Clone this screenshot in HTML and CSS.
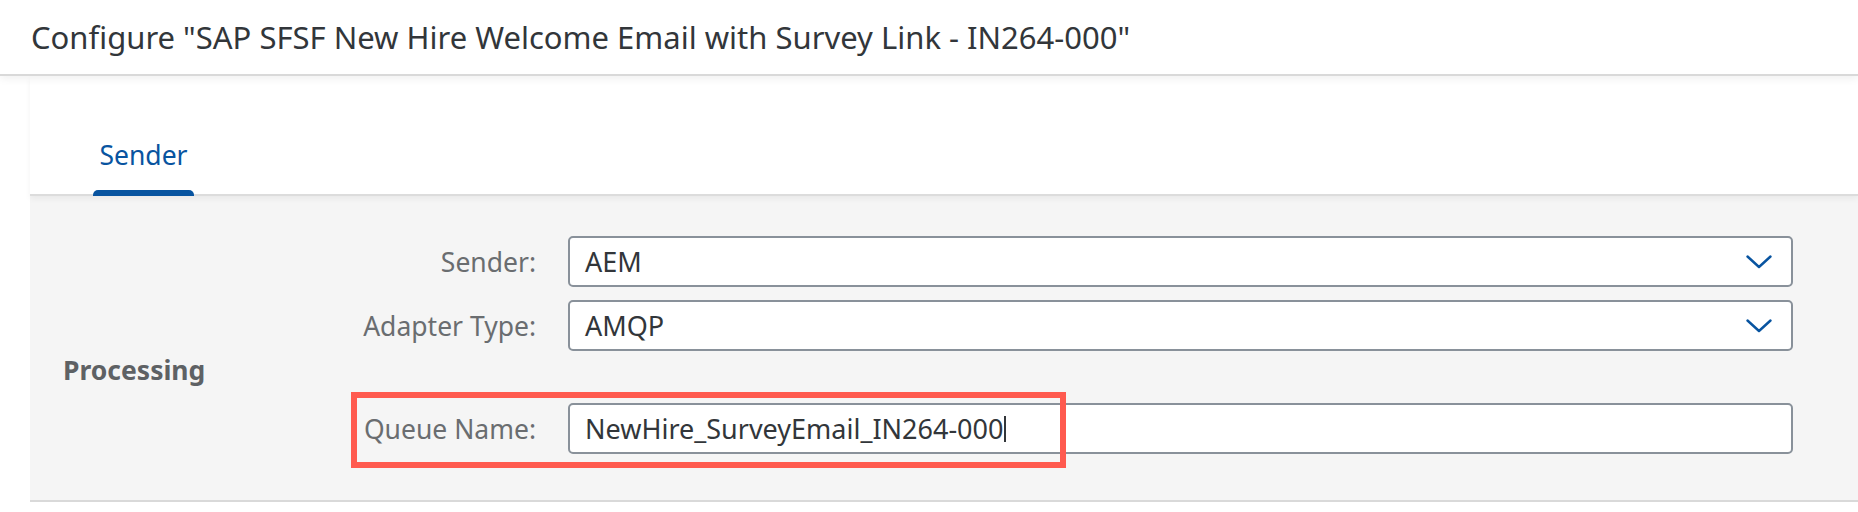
FILE: index.html
```html
<!DOCTYPE html>
<html lang="en">
<head>
<meta charset="utf-8">
<title>Configure</title>
<link rel="stylesheet" href="styles.css">
</head>
<body>
<header class="page-header">
  <h1 class="page-title">Configure "SAP SFSF New Hire Welcome Email with Survey Link - IN264-000"</h1>
</header>
<main class="content">
  <nav class="tabbar">
    <div class="tab tab-active">Sender</div>
  </nav>
  <section class="panel">
    <div class="section-title">Processing</div>
    <div class="form">
      <div class="row">
        <label class="label">Sender:</label>
        <div class="field select">
          <span class="value">AEM</span>
          <svg class="chevron" width="26" height="14" viewBox="0 0 26 14"><path d="M1.5 1.5 L13 12 L24.5 1.5" fill="none" stroke="#0854a0" stroke-width="2.4" stroke-linecap="round" stroke-linejoin="round"/></svg>
        </div>
      </div>
      <div class="row">
        <label class="label">Adapter Type:</label>
        <div class="field select">
          <span class="value">AMQP</span>
          <svg class="chevron" width="26" height="14" viewBox="0 0 26 14"><path d="M1.5 1.5 L13 12 L24.5 1.5" fill="none" stroke="#0854a0" stroke-width="2.4" stroke-linecap="round" stroke-linejoin="round"/></svg>
        </div>
      </div>
      <div class="row row-queue">
        <label class="label">Queue Name:</label>
        <div class="field">
          <span class="value">NewHire_SurveyEmail_IN264-000</span><span class="caret"></span>
        </div>
        <div class="highlight"></div>
      </div>
    </div>
  </section>
</main>
</body>
</html>
```
FILE: styles.css
```css
html, body {
  margin: 0;
  padding: 0;
  background: #ffffff;
}
body {
  font-family: "Noto Sans", "Liberation Sans", sans-serif;
  color: #32363a;
}
.page-header {
  height: 74px;
  border-bottom: 2px solid #d9d9d9;
  box-shadow: 0 3px 8px rgba(0, 0, 0, 0.06);
  display: flex;
  align-items: center;
  position: relative;
  z-index: 2;
}
.page-title {
  margin: 0 0 0 31px;
  font-family: "Noto Sans", "Liberation Sans", sans-serif;
  font-weight: normal;
  font-size: 31px;
  color: #32363a;
}
.content {
  margin-left: 30px;
}
.tabbar {
  height: 118px;
  display: flex;
  align-items: flex-end;
  padding-left: 63px;
  border-bottom: 2px solid #dcdcdc;
  box-shadow: 0 3px 6px rgba(0, 0, 0, 0.05);
  position: relative;
  z-index: 1;
}
.tab {
  width: 101px;
  padding-bottom: 23px;
  display: flex;
  justify-content: center;
  font-size: 26.5px;
  line-height: 36px;
  color: #0854a0;
  position: relative;
  top: 2px;
}
.tab-active::after {
  content: "";
  position: absolute;
  left: 0;
  right: 0;
  bottom: 0;
  height: 6px;
  background: #0854a0;
  border-radius: 5px 5px 0 0;
}
.panel {
  background: #f5f5f5;
  display: flex;
  padding: 40px 65px 46px 33px;
  border-bottom: 2px solid #d9d9d9;
  height: 218px;
}
.section-title {
  width: 150px;
  padding-top: 116px;
  font-size: 26.5px;
  font-weight: bold;
  color: #5e6164;
}
.form {
  flex: 1;
  display: flex;
  flex-direction: column;
  gap: 13px;
}
.row {
  display: flex;
  align-items: center;
  gap: 32px;
  position: relative;
}
.row-queue {
  margin-top: 39px;
}
.label {
  width: 323px;
  text-align: right;
  font-size: 26.5px;
  color: #6a6d70;
}
.field {
  flex: 1;
  height: 51px;
  box-sizing: border-box;
  background: #ffffff;
  border: 2px solid #89919a;
  border-radius: 5px;
  display: flex;
  align-items: center;
  padding: 0 19px 0 15px;
  font-size: 27px;
  color: #32363a;
}
.select .value {
  flex: 1;
}
.chevron {
  display: block;
}
.caret {
  display: inline-block;
  width: 2px;
  height: 26px;
  background: #32363a;
  margin-left: 1px;
}
.highlight {
  position: absolute;
  left: 138px;
  top: -11px;
  width: 715px;
  height: 76px;
  box-sizing: border-box;
  border: 6px solid #ff5a4f;
  pointer-events: none;
}
```
